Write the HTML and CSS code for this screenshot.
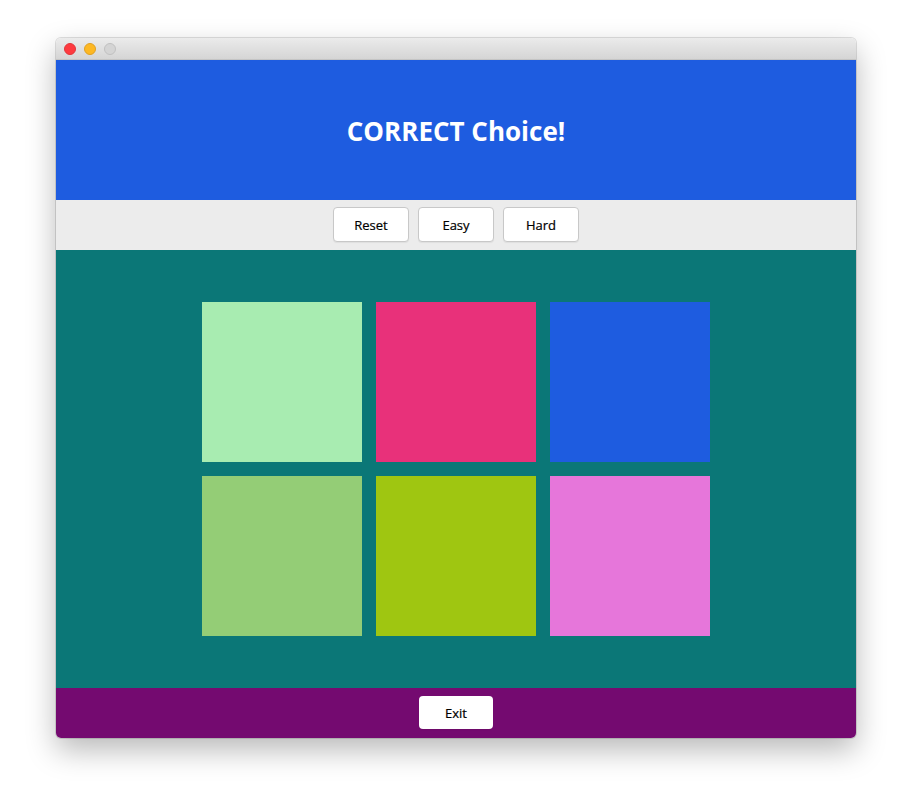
FILE: index.html
```html
<!DOCTYPE html>
<html>
<head>
<meta charset="utf-8">
<link rel="stylesheet" href="styles.css">
</head>
<body>
<div class="window">
  <div class="titlebar">
    <span class="light red"></span>
    <span class="light yellow"></span>
    <span class="light grey"></span>
  </div>
  <div class="header">CORRECT Choice!</div>
  <div class="toolbar">
    <button class="btn">Reset</button>
    <button class="btn">Easy</button>
    <button class="btn">Hard</button>
  </div>
  <div class="board">
    <div class="grid">
      <div class="sq c1"></div>
      <div class="sq c2"></div>
      <div class="sq c3"></div>
      <div class="sq c4"></div>
      <div class="sq c5"></div>
      <div class="sq c6"></div>
    </div>
  </div>
  <div class="footer">
    <button class="btn exit">Exit</button>
  </div>
</div>
</body>
</html>
```
FILE: styles.css
```css
html, body { margin: 0; padding: 0; }
body {
  width: 912px; height: 812px; background: #ffffff;
  font-family: "Open Sans", "DejaVu Sans", sans-serif;
  padding-top: 38px; padding-left: 56px; box-sizing: border-box;
}
.window {
  width: 800px; height: 700px;
  border-radius: 5px; overflow: hidden;
  box-shadow: 0 12px 30px rgba(0,0,0,0.28), 0 0 0 1px rgba(0,0,0,0.12);
  display: flex; flex-direction: column;
}
.titlebar {
  height: 22px; flex: none;
  background: linear-gradient(#ebebeb, #d5d5d5);
  display: flex; align-items: center; gap: 8px; padding-left: 8px;
  box-sizing: border-box; border-bottom: 1px solid #c4c4c4;
}
.light { width: 12px; height: 12px; border-radius: 50%; box-sizing: border-box; }
.red { background: #fe3a3f; border: 1px solid #e0363a; }
.yellow { background: #fdb823; border: 1px solid #dfa023; }
.grey { background: #d4d4d4; border: 1px solid #c0c0c0; }
.header {
  height: 140px; flex: none; background: #1e5ce0; color: #fff;
  display: flex; align-items: center; justify-content: center;
  font-size: 26px; font-weight: bold; padding-top: 1px; box-sizing: border-box;
}
.toolbar {
  height: 50px; flex: none; background: #ececec;
  display: flex; justify-content: center; gap: 9px; padding-top: 7px; box-sizing: border-box;
}
.btn {
  width: 76px; height: 35px; background: #fff;
  border: 1px solid #c8c8c8; border-radius: 4px;
  font-family: "Open Sans", "DejaVu Sans", sans-serif; font-size: 13px; font-weight: 400; color: #000;
  padding: 0; box-shadow: 0 1px 1px rgba(0,0,0,0.06);
  -webkit-text-stroke: 0.2px #000;
}
.board {
  flex: 1; background: #0b7777;
  display: flex; justify-content: center; padding-top: 52px; box-sizing: border-box;
}
.grid {
  display: grid; grid-template-columns: repeat(3, 160px); grid-auto-rows: 160px;
  gap: 14px; align-content: start;
}
.c1 { background: #a8ecb1; }
.c2 { background: #e8317a; }
.c3 { background: #1e5ce0; }
.c4 { background: #94cd76; }
.c5 { background: #9fc611; }
.c6 { background: #e676da; }
.footer {
  height: 50px; flex: none; background: #740a70;
  display: flex; justify-content: center; padding-top: 8px; box-sizing: border-box;
}
.exit { width: 74px; height: 33px; border: none; }
```
